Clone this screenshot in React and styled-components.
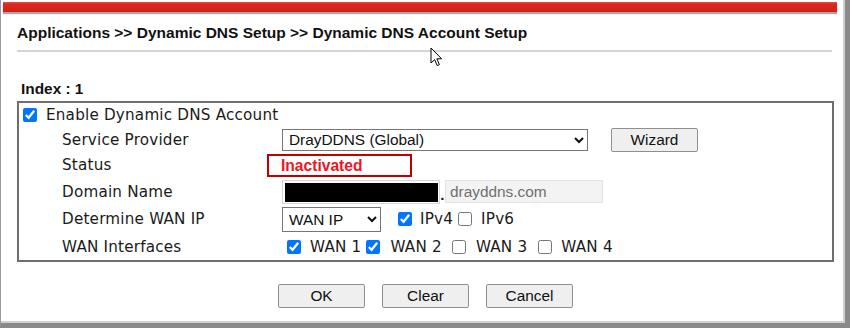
import React from 'react';
import styled, { createGlobalStyle } from 'styled-components';

const GlobalStyle = createGlobalStyle`
  html, body {
    margin: 0;
    padding: 0;
    background: #fff;
  }
`;

const Frame = styled.div`
  position: relative;
  box-sizing: border-box;
  width: 850px;
  height: 328px;
  padding-top: 1px;
  border-left: 1px solid #9a9a9a;
  border-right: 5px solid #8a8a8a;
  border-bottom: 5px solid #8a8a8a;
  box-shadow: inset -2px -2px 0 #d0d0d0;
  background: #fff;
  font-family: Arial, "Liberation Sans", sans-serif;
  color: #111;
`;

const RedBar = styled.div`
  height: 10px;
  margin: 1px 8px 0 2px;
  background: linear-gradient(#e2564c 0, #dc2820 20%, #d8231b 80%, #c81d16 100%);
  box-shadow: 0 2px 1px #a8a8a8;
`;

const Title = styled.h1`
  margin: 11px 0 0 16px;
  font-size: 15.5px;
  line-height: 20px;
  font-weight: bold;
`;

const Rule = styled.div`
  height: 2px;
  margin: 7px 13px 0 16px;
  background: #d4d4d4;
`;

const IndexTitle = styled.div`
  margin: 27px 0 0 20px;
  font-size: 15.4px;
  line-height: 20px;
  font-weight: bold;
`;

const Panel = styled.div`
  box-sizing: border-box;
  width: 817px;
  margin: 2px 0 0 16px;
  border: 2px solid #6e6e6e;
  font-family: "DejaVu Sans", Verdana, sans-serif;
  font-size: 15.2px;
  letter-spacing: 0.2px;
  color: #1a1a1a;
`;

const Row = styled.div`
  display: flex;
  align-items: center;
  height: ${(p) => p.$h}px;
`;

const Label = styled.div`
  box-sizing: border-box;
  width: 263px;
  padding-left: 43px;
  flex: none;
`;

const Controls = styled.div`
  display: flex;
  align-items: center;
`;

const Check = styled.input.attrs({ type: 'checkbox', readOnly: true })`
  width: 14px;
  height: 14px;
  margin: 0 0 0 ${(p) => p.$ml || 0}px;
  flex: none;
`;

const CheckText = styled.span`
  margin-left: ${(p) => p.$ml ?? 9}px;
  white-space: nowrap;
`;

const Select = styled.select`
  box-sizing: border-box;
  width: ${(p) => p.$w}px;
  height: ${(p) => p.$h}px;
  padding: 0 2px;
  font-family: Arial, "Liberation Sans", sans-serif;
  font-size: 15.4px;
  color: #111;
  background: #fff;
  border: 1px solid #767676;
  border-radius: 0;
`;

const Button = styled.button`
  box-sizing: border-box;
  width: 87px;
  height: 24px;
  margin-left: ${(p) => p.$ml || 0}px;
  padding: 0;
  font-family: Arial, "Liberation Sans", sans-serif;
  font-size: 15.4px;
  color: #111;
  background: #efefef;
  border: 1px solid #8f8f8f;
  border-radius: 2px;
`;

const StatusBox = styled.div`
  box-sizing: border-box;
  width: 145px;
  height: 23px;
  margin-left: -15px;
  padding-left: 12px;
  border: 2px solid #c00000;
  font-family: Arial, "Liberation Sans", sans-serif;
  font-size: 15.6px;
  font-weight: bold;
  line-height: 19px;
  letter-spacing: 0;
  color: #f0141e;
`;

const Masked = styled.div`
  box-sizing: border-box;
  width: 158px;
  height: 24px;
  padding: 2px 1px 1px 2px;
  border: 1px solid #d6d6d6;
  background: #000;
  background-clip: content-box;
`;

const Dot = styled.span`
  width: 5px;
  padding-top: 6px;
  font-family: Arial, "Liberation Sans", sans-serif;
  font-weight: bold;
  text-align: center;
`;

const ReadonlyField = styled.div`
  box-sizing: border-box;
  width: 158px;
  height: 23px;
  padding-left: 4px;
  border: 1px solid #e2e2e2;
  background: #f3f3f3;
  font-family: Arial, "Liberation Sans", sans-serif;
  font-size: 15.4px;
  line-height: 21px;
  letter-spacing: 0;
  color: #707070;
`;

const Actions = styled.div`
  display: flex;
  justify-content: center;
  width: 817px;
  margin: 22px 0 0 16px;
`;

const Cursor = styled.svg`
  position: absolute;
  left: 429px;
  top: 47px;
`;

export default function App() {
  return (
    <>
      <GlobalStyle />
      <Frame>
        <RedBar />
        <Title>Applications &gt;&gt; Dynamic DNS Setup &gt;&gt; Dynamic DNS Account Setup</Title>
        <Rule />
        <IndexTitle>Index : 1</IndexTitle>
        <Panel>
          <Row $h={24}>
            <Check $ml={4} defaultChecked />
            <CheckText>Enable Dynamic DNS Account</CheckText>
          </Row>
          <Row $h={25}>
            <Label>Service Provider</Label>
            <Controls>
              <Select $w={306} $h={22} defaultValue="dray">
                <option value="dray">DrayDDNS (Global)</option>
              </Select>
              <Button $ml={23}>Wizard</Button>
            </Controls>
          </Row>
          <Row $h={26}>
            <Label>Status</Label>
            <StatusBox>Inactivated</StatusBox>
          </Row>
          <Row $h={27}>
            <Label>Domain Name</Label>
            <Controls>
              <Masked />
              <Dot>.</Dot>
              <ReadonlyField>drayddns.com</ReadonlyField>
            </Controls>
          </Row>
          <Row $h={28}>
            <Label>Determine WAN IP</Label>
            <Controls>
              <Select $w={99} $h={25} defaultValue="wanip">
                <option value="wanip">WAN IP</option>
              </Select>
              <Check $ml={17} defaultChecked />
              <CheckText $ml={8}>IPv4</CheckText>
              <Check $ml={5} />
              <CheckText>IPv6</CheckText>
            </Controls>
          </Row>
          <Row $h={27}>
            <Label>WAN Interfaces</Label>
            <Controls>
              <Check $ml={5} defaultChecked />
              <CheckText>WAN 1</CheckText>
              <Check $ml={5} defaultChecked />
              <CheckText $ml={10}>WAN 2</CheckText>
              <Check $ml={10} />
              <CheckText $ml={10}>WAN 3</CheckText>
              <Check $ml={11} />
              <CheckText>WAN 4</CheckText>
            </Controls>
          </Row>
        </Panel>
        <Actions>
          <Button>OK</Button>
          <Button $ml={17}>Clear</Button>
          <Button $ml={17}>Cancel</Button>
        </Actions>
        <Cursor width="14" height="21" viewBox="0 0 14 21">
          <path
            d="M1 1 L1 16 L4.6 12.6 L7.2 18.6 L9.4 17.6 L6.9 11.8 L11.6 11.8 Z"
            fill="#fff"
            stroke="#000"
            strokeWidth="1"
            strokeLinejoin="miter"
          />
        </Cursor>
      </Frame>
    </>
  );
}
